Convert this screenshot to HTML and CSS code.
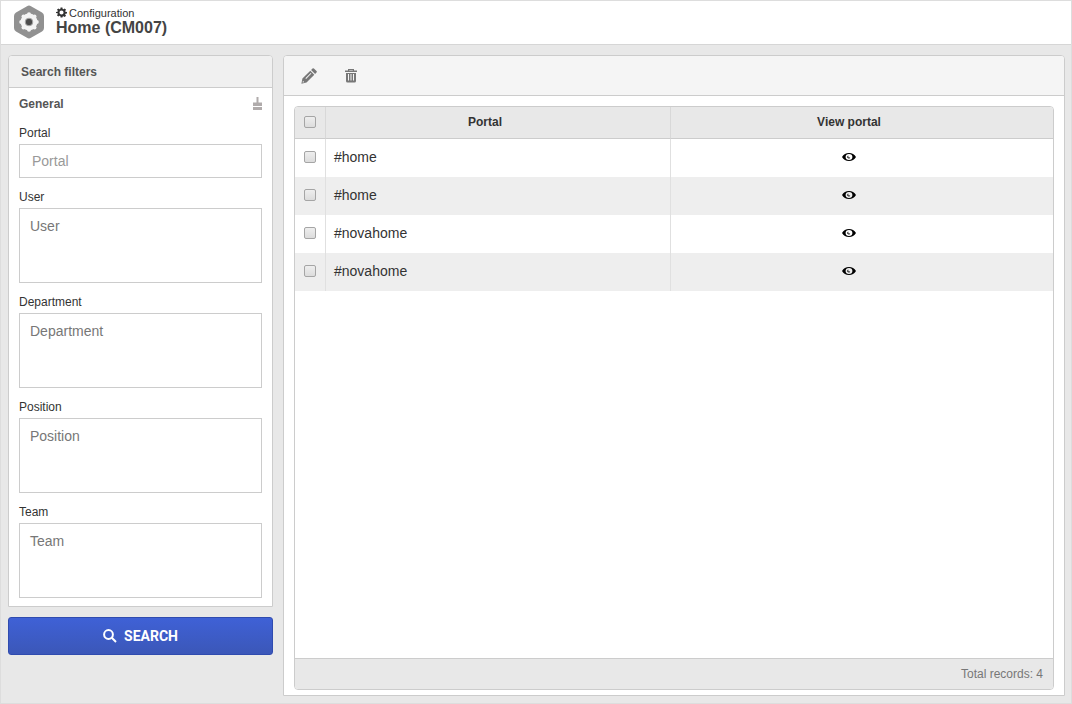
FILE: index.html
```html
<!DOCTYPE html>
<html lang="en">
<head>
<meta charset="utf-8">
<title>Home (CM007)</title>
<link rel="stylesheet" href="styles.css">
</head>
<body>
<svg class="defs" aria-hidden="true">
  <symbol id="gear" viewBox="0 0 24 24">
    <path fill-rule="evenodd" d="M10 1h4l.6 3.300 1.700.7L19 3.100l2.900 2.900-1.900 2.700.7 1.700 3.300.6v3l-3.300.6-.7 1.700 1.900 2.700-2.900 2.900-2.700-1.900-1.700.7L14 23h-4l-.6-3.300-1.700-.7L5 20.900 2.100 18 4 15.300l-.7-1.700L0 13v-2l3.300-.9L4 8.400 2.100 5.900 5 3l2.700 2 1.700-.7zM12 7.500a4.500 4.500 0 1 0 0 9 4.500 4.500 0 0 0 0-9z"/>
  </symbol>
  <symbol id="eye" viewBox="0 0 14 10">
    <path fill-rule="evenodd" d="M0 5C1.500 2.200 4 1 7 1s5.500 1.200 7 4C12.500 7.800 10 9 7 9S1.500 7.800 0 5zM7 2a3.400 3 0 1 0 0 6 3.400 3 0 0 0 0-6z"/>
    <path d="M6.300 3.600v1.800h1.900a1.500 1.500 0 1 1-1.900-1.800z"/>
  </symbol>
</svg>
<div class="page">
  <header class="top">
    <svg class="logo" viewBox="0 0 30 34" aria-hidden="true">
      <path d="M13 1.200q2-1.200 4 0l11 6.300q2 1.100 2 3.400v12.200q0 2.300-2 3.400l-11 6.300q-2 1.200-4 0L2 26.500q-2-1.100-2-3.400V10.900q0-2.300 2-3.400z" fill="#919191"/>
      <g fill="#f4f4f4"><circle cx="15" cy="17" r="8.400"/><circle cx="15" cy="9.200" r="2"/><circle cx="20.500" cy="11.500" r="2"/><circle cx="22.800" cy="17" r="2"/><circle cx="20.500" cy="22.500" r="2"/><circle cx="15" cy="24.800" r="2"/><circle cx="9.500" cy="22.500" r="2"/><circle cx="7.200" cy="17" r="2"/><circle cx="9.500" cy="11.500" r="2"/></g>
      <circle cx="15" cy="17" r="3.800" fill="#4c4c4c" stroke="#aaa" stroke-width="1"/>
    </svg>
    <div class="titles">
      <div class="crumb"><svg class="crumb-icon" aria-hidden="true"><use href="#gear"/></svg>Configuration</div>
      <h1 class="title">Home (CM007)</h1>
    </div>
  </header>
  <main class="content">
    <form class="sidebar">
      <section class="filters">
        <h2 class="filters-head">Search filters</h2>
        <div class="filters-body">
          <div class="group">
            <h3 class="group-title">General</h3>
            <button class="clear" type="button" aria-label="Clear filters">
              <svg class="brush" viewBox="0 0 9 13" aria-hidden="true"><path d="M3.500 0h2v5.500H9V9H0V5.500h3.500zM0 10h9v3H0z"/></svg>
            </button>
          </div>
          <div class="field"><label for="portal">Portal</label><input class="box" id="portal" type="text" placeholder="Portal"></div>
          <div class="field"><label for="user">User</label><textarea class="box area" id="user" placeholder="User"></textarea></div>
          <div class="field"><label for="department">Department</label><textarea class="box area" id="department" placeholder="Department"></textarea></div>
          <div class="field"><label for="position">Position</label><textarea class="box area" id="position" placeholder="Position"></textarea></div>
          <div class="field"><label for="team">Team</label><textarea class="box area" id="team" placeholder="Team"></textarea></div>
        </div>
      </section>
      <button class="search" type="submit">
        <svg class="search-icon" viewBox="0 0 14 14" aria-hidden="true"><circle cx="5.500" cy="5.500" r="4.400"/><path d="M8.800 8.800l4.200 4.200"/></svg>
        SEARCH
      </button>
    </form>
    <section class="results">
      <div class="toolbar">
        <button class="tool" type="button" aria-label="Edit">
          <svg class="tool-icon" viewBox="0 0 16 16" aria-hidden="true"><path fill-rule="evenodd" d="M1.400 10.500L9.300 2.700l4 4L5.500 14.600.4 15.700zM2 12.800l-.5 1.800 1.800-.4zM4.400 10.200l.7.700L10.400 5.600l-.7-.7zM10.100 1.900L11.500.5q.7-.7 1.400 0L15.500 3.100q.7.700 0 1.400L14.100 5.900z"/></svg>
        </button>
        <button class="tool" type="button" aria-label="Delete">
          <svg class="tool-icon" viewBox="0 0 16 16" aria-hidden="true"><path fill-rule="evenodd" d="M5 2.500V1h6v1.500h3V4H2V2.500zM6.200 2.500h3.600V2H6.200zM3 5h10v8q0 1.500-1.500 1.500h-7Q3 14.500 3 13zM5 6v6.500h1V6zM7.500 6v6.500h1V6zM10 6v6.500h1V6z"/></svg>
        </button>
      </div>
      <div class="grid">
        <div class="grid-body">
          <table class="table">
            <colgroup><col class="col-check"><col class="col-portal"><col></colgroup>
            <thead>
              <tr><th><input class="check" type="checkbox" aria-label="Select all"></th><th>Portal</th><th class="view">View portal</th></tr>
            </thead>
            <tbody>
              <tr><td><input class="check" type="checkbox" aria-label="Select row 1"></td><td>#home</td><td class="view"><a class="view-link" href="#home" aria-label="View portal"><svg class="eye"><use href="#eye"/></svg></a></td></tr>
              <tr><td><input class="check" type="checkbox" aria-label="Select row 2"></td><td>#home</td><td class="view"><a class="view-link" href="#home" aria-label="View portal"><svg class="eye"><use href="#eye"/></svg></a></td></tr>
              <tr><td><input class="check" type="checkbox" aria-label="Select row 3"></td><td>#novahome</td><td class="view"><a class="view-link" href="#novahome" aria-label="View portal"><svg class="eye"><use href="#eye"/></svg></a></td></tr>
              <tr><td><input class="check" type="checkbox" aria-label="Select row 4"></td><td>#novahome</td><td class="view"><a class="view-link" href="#novahome" aria-label="View portal"><svg class="eye"><use href="#eye"/></svg></a></td></tr>
            </tbody>
          </table>
        </div>
        <footer class="grid-foot">Total records: 4</footer>
      </div>
    </section>
  </main>
</div>
</body>
</html>
```
FILE: styles.css
```css
* { box-sizing: border-box; }
body { margin: 0; font: 12px/18px "Liberation Sans", Arial, sans-serif; color: #333; }
h1, h2, h3 { margin: 0; }
button { font: inherit; cursor: pointer; }
svg { display: block; }
.defs { display: none; }

.page { display: flex; flex-direction: column; min-height: 100vh; background: #e8e8e8; border: 1px solid #ddd; }

.top { display: flex; align-items: center; gap: 12px; height: 44px; padding: 0 0 2px 13px; background: #fff; border-bottom: 1px solid #d6d6d6; }
.logo { width: 30px; height: 34px; }
.crumb { display: flex; align-items: center; gap: 2px; font-size: 11px; line-height: 12px; }
.crumb-icon { width: 11px; height: 11px; fill: #333; }
.title { font-size: 16px; line-height: 18px; color: #444; }

.content { flex: 1; display: grid; grid-template-columns: 265px minmax(0, 1fr); gap: 10px; padding: 10px 6px 7px 7px; }

.filters { background: #fff; border: 1px solid #ccc; border-radius: 4px 4px 0 0; }
.filters-head { padding: 7px 12px 6px; font-size: 12px; line-height: 18px; color: #555; background: #f0f0f0; border-bottom: 1px solid #ccc; border-radius: 3px 3px 0 0; }
.filters-body { padding: 0 10px 8px; }
.group { display: flex; align-items: center; justify-content: space-between; height: 32px; margin-bottom: 4px; }
.group-title { font-size: 12px; color: #555; }
.clear { padding: 0 0 2px; background: none; border: 0; }
.brush { width: 9px; height: 13px; fill: #b0abab; }
.field + .field { margin-top: 10px; }
.field label { display: block; margin-bottom: 2px; }
.box { display: block; width: 100%; height: 34px; padding: 6px 12px; font: 14px/20px "Liberation Sans", Arial, sans-serif; color: #333; background: #fff; border: 1px solid #ccc; border-radius: 0; }
.box::placeholder { color: #999; }
.area { height: 75px; padding: 7px 10px; resize: none; }
.area::placeholder { color: #777; }
.search { display: flex; align-items: center; justify-content: center; gap: 7px; width: 100%; height: 38px; margin-top: 10px; font: bold 14px/18px Roboto, "Liberation Sans", sans-serif; color: #fff; background: linear-gradient(#3f61d6, #3b57b8); border: 1px solid #2f4baf; border-radius: 3px; }
.search-icon { width: 14px; height: 14px; fill: none; stroke: #fff; stroke-width: 2; }

.results { display: flex; flex-direction: column; background: #fff; border: 1px solid #ccc; border-radius: 4px 4px 0 0; }
.toolbar { display: flex; gap: 26px; height: 40px; padding-left: 17px; background: #f5f5f5; border-bottom: 1px solid #ccc; border-radius: 3px 3px 0 0; }
.tool { padding: 0; background: none; border: 0; }
.tool-icon { width: 16px; height: 16px; fill: #777; }
.grid { flex: 1; display: flex; flex-direction: column; margin: 10px 10px 5px; border: 1px solid #ccc; border-radius: 4px; overflow: hidden; }
.grid-body { flex: 1; }
.table { width: 100%; table-layout: fixed; border-collapse: separate; border-spacing: 0; }
.col-check { width: 31px; }
.col-portal { width: 345px; }
.table th { height: 32px; padding: 0 26px 2px 0; font-size: 12px; line-height: 18px; background: #e8e8e8; border-bottom: 1px solid #ccc; border-right: 1px solid #d8d8d8; }
.table td { height: 38px; padding: 0 8px 2px; font-size: 14px; border-right: 1px solid #e0e0e0; }
.table tbody tr:nth-child(even) { background: #eee; }
.table th:first-child, .table td:first-child { padding: 0 0 2px; }
.table th.view, .table td.view { padding: 0 26px 2px 0; border-right: 0; }
.view-link { display: flex; justify-content: center; }
.eye { width: 14px; height: 10px; fill: #000; }
.check { display: block; appearance: none; width: 12px; height: 12px; margin: 0 auto; background: linear-gradient(#eee, #dcdcdc); border: 1px solid #a5a5a5; border-radius: 2px; }
.check:checked { background: #3f61d6; }
.grid-foot { padding: 6px 10px; text-align: right; color: #777; background: #e8e8e8; border-top: 1px solid #ccc; }
```
